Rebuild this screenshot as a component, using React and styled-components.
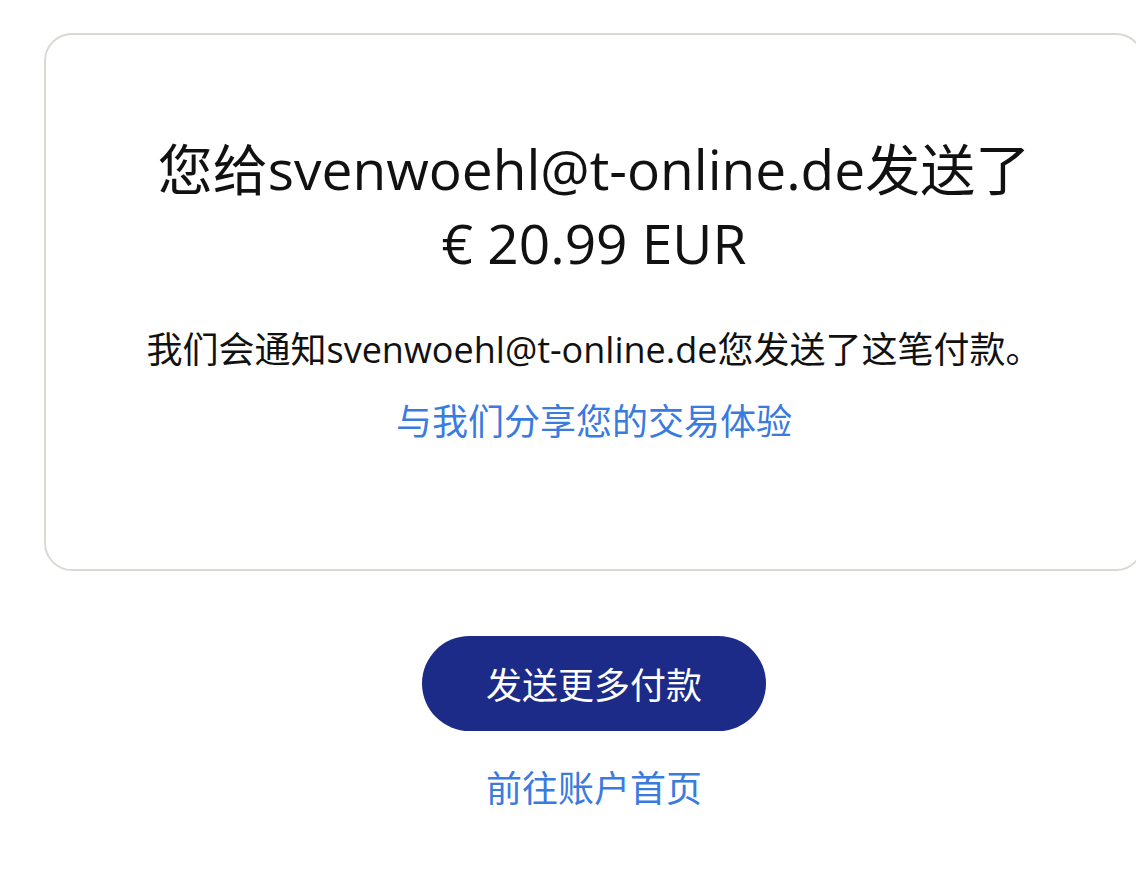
import styled, { createGlobalStyle } from 'styled-components';

const GlobalStyle = createGlobalStyle`
  html, body {
    margin: 0;
    padding: 0;
    background: #ffffff;
    overflow: hidden;
  }
  body {
    font-family: "Open Sans", "Noto Sans CJK SC", sans-serif;
    color: #111111;
  }
`;

export default function App() {
  return (
    <>
      <GlobalStyle />
      <Page>
        <Card>
          <Title>
            <TitleLine>您给svenwoehl@t-online.de发送了</TitleLine>
            <TitleLine>€ 20.99 EUR</TitleLine>
          </Title>
          <Message>我们会通知svenwoehl@t-online.de您发送了这笔付款。</Message>
          <Link href="#">与我们分享您的交易体验</Link>
        </Card>
        <Actions>
          <PrimaryButton type="button">发送更多付款</PrimaryButton>
          <Link href="#">前往账户首页</Link>
        </Actions>
      </Page>
    </>
  );
}

const Page = styled.div`
  width: 1100px;
  padding: 33px 0 0 44px;
  display: flex;
  flex-direction: column;
`;

const Card = styled.section`
  box-sizing: border-box;
  width: 1100px;
  height: 538px;
  border: 2px solid #dcd8d3;
  border-radius: 28px;
  padding: 97px 40px 0;
  display: flex;
  flex-direction: column;
  align-items: center;
  text-align: center;
`;

const Title = styled.h1`
  margin: 0;
  font-size: 55px;
  font-weight: 400;
  line-height: 74px;
  color: #111111;
`;

const TitleLine = styled.div`
  white-space: nowrap;
`;

const Message = styled.p`
  margin: 45px 0 0;
  font-size: 36px;
  line-height: 50px;
  color: #111111;
  white-space: nowrap;
`;

const Link = styled.a`
  display: block;
  margin-top: 22px;
  font-size: 36px;
  line-height: 50px;
  color: #3a7be0;
  text-decoration: none;
`;

const Actions = styled.div`
  display: flex;
  flex-direction: column;
  align-items: center;
  margin-top: 65px;
  gap: 11px;
`;

const PrimaryButton = styled.button`
  width: 344px;
  height: 95px;
  border: none;
  border-radius: 48px;
  background: #1c2a88;
  color: #ffffff;
  font-family: "Open Sans", "Noto Sans CJK SC", sans-serif;
  font-size: 36px;
  cursor: pointer;
`;
